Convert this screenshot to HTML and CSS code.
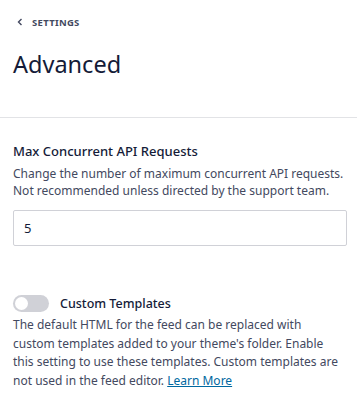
FILE: index.html
```html
<!DOCTYPE html>
<html>
<head>
<meta charset="utf-8">
<link rel="stylesheet" href="styles.css">
</head>
<body>
<div class="page">
  <header class="head">
    <a class="back" href="#">
      <svg class="chev" width="6" height="8" viewBox="0 0 6 8"><path d="M4.5 1 L1.5 4 L4.5 7" fill="none" stroke="#434960" stroke-width="1.4"/></svg>
      <span>SETTINGS</span>
    </a>
    <h1 class="title">Advanced</h1>
  </header>
  <section class="section">
    <h2 class="label">Max Concurrent API Requests</h2>
    <p class="desc">Change the number of maximum concurrent API requests. Not recommended unless directed by the support team.</p>
    <input class="field" type="text" value="5">
  </section>
  <section class="section toggle-section">
    <div class="toggle-row">
      <span class="toggle"><span class="knob"></span></span>
      <span class="toggle-label">Custom Templates</span>
    </div>
    <p class="desc">The default HTML for the feed can be replaced with custom templates added to your theme's folder. Enable this setting to use these templates. Custom templates are not used in the feed editor. <a class="link" href="#">Learn More</a></p>
  </section>
</div>
</body>
</html>
```
FILE: styles.css
```css
html, body {
  margin: 0;
  padding: 0;
  background: #fff;
}
body {
  font-family: "Noto Sans", "Open Sans", sans-serif;
  color: #434960;
}
.page {
  width: 357px;
}
.head {
  padding: 16px 13px 0;
  border-bottom: 1px solid #e2e3e6;
  box-sizing: border-box;
  height: 118px;
}
.back {
  display: flex;
  align-items: center;
  gap: 9px;
  text-decoration: none;
  color: #434960;
  font-size: 9.5px;
  font-weight: 700;
  letter-spacing: 0.3px;
  padding-left: 4px;
  height: 12px;
}
.title {
  margin: 21px 0 0;
  font-size: 23.5px;
  font-weight: 400;
  color: #141b38;
  line-height: 30px;
}
.section {
  padding: 0 10px 0 13px;
}
.label {
  margin: 24px 0 0;
  font-size: 13px;
  font-weight: 500;
  color: #141b38;
  line-height: 18px;
}
.desc {
  margin: 5px 0 0;
  font-size: 12px;
  line-height: 17px;
  color: #434960;
}
.field {
  display: block;
  margin-top: 11px;
  width: 100%;
  box-sizing: border-box;
  height: 36px;
  border: 1px solid #d0d1d7;
  border-radius: 2px;
  padding: 0 10px;
  font-family: inherit;
  font-size: 13px;
  color: #141b38;
  outline: none;
}
.toggle-section {
  margin-top: 49px;
  padding-right: 14px;
}
.toggle-row {
  display: flex;
  align-items: center;
  gap: 11px;
}
.toggle {
  width: 36px;
  height: 17px;
  border-radius: 9px;
  background: #d0d1d7;
  position: relative;
  flex: none;
}
.knob {
  position: absolute;
  left: 2px;
  top: 2px;
  width: 13px;
  height: 13px;
  border-radius: 50%;
  background: #fff;
}
.toggle-label {
  font-size: 12.5px;
  font-weight: 500;
  color: #141b38;
}
.toggle-section .desc {
  margin-top: 4px;
  line-height: 18.5px;
}
.link {
  color: #0068a0;
  text-decoration: underline;
}
```
